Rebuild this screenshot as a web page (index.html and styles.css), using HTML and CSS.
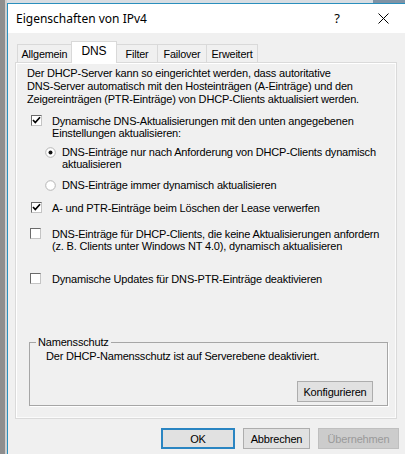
FILE: index.html
```html
<!DOCTYPE html>
<html lang="de">
<head>
<meta charset="utf-8">
<title>Eigenschaften von IPv4</title>
<link rel="stylesheet" href="styles.css">
</head>
<body>
<div class="screen">
  <div class="window">
    <div class="titlebar">
      <span class="title">Eigenschaften von IPv4</span>
      <span class="help">?</span>
      <svg class="close" width="11" height="11" viewBox="0 0 11 11"><path d="M0.5 0.5 L10.5 10.5 M10.5 0.5 L0.5 10.5" stroke="#000" stroke-width="1" fill="none"/></svg>
    </div>
    <div class="body">
      <div class="tabs">
        <div class="tab w-allg">Allgemein</div>
        <div class="tab tab-active w-dns">DNS</div>
        <div class="tab w-filter">Filter</div>
        <div class="tab w-fail">Failover</div>
        <div class="tab w-erw">Erweitert</div>
      </div>
      <div class="panel">
        <p class="intro">Der DHCP-Server kann so eingerichtet werden, dass autoritative<br>DNS-Server automatisch mit den Hosteinträgen (A-Einträge) und den<br>Zeigereinträgen (PTR-Einträge) von DHCP-Clients aktualisiert werden.</p>

        <div class="opt o-cb1">
          <span class="cb"><svg width="9" height="9" viewBox="0 0 9 9"><path d="M1 4 L3.3 6.5 L8 1.3" stroke="#000" stroke-width="1.7" fill="none"/></svg></span>
          <span class="lbl">Dynamische DNS-Aktualisierungen mit den unten angegebenen<br>Einstellungen aktualisieren:</span>
        </div>

        <div class="opt sub o-r1">
          <svg class="rb" width="11" height="11" viewBox="0 0 11 11"><circle cx="5.5" cy="5.5" r="4.8" fill="#fff" stroke="#b5b5b5"/><circle cx="5.5" cy="5.5" r="2" fill="#111"/></svg>
          <span class="lbl">DNS-Einträge nur nach Anforderung von DHCP-Clients dynamisch<br>aktualisieren</span>
        </div>

        <div class="opt sub o-r2">
          <svg class="rb" width="11" height="11" viewBox="0 0 11 11"><circle cx="5.5" cy="5.5" r="4.8" fill="#fff" stroke="#b5b5b5"/></svg>
          <span class="lbl">DNS-Einträge immer dynamisch aktualisieren</span>
        </div>

        <div class="opt o-cb2">
          <span class="cb"><svg width="9" height="9" viewBox="0 0 9 9"><path d="M1 4 L3.3 6.5 L8 1.3" stroke="#000" stroke-width="1.7" fill="none"/></svg></span>
          <span class="lbl">A- und PTR-Einträge beim Löschen der Lease verwerfen</span>
        </div>

        <div class="opt o-cb3">
          <span class="cb"></span>
          <span class="lbl">DNS-Einträge für DHCP-Clients, die keine Aktualisierungen anfordern<br>(z. B. Clients unter Windows NT 4.0), dynamisch aktualisieren</span>
        </div>

        <div class="opt o-cb4">
          <span class="cb"></span>
          <span class="lbl">Dynamische Updates für DNS-PTR-Einträge deaktivieren</span>
        </div>

        <fieldset class="group">
          <legend>Namensschutz</legend>
          <p class="group-text">Der DHCP-Namensschutz ist auf Serverebene deaktiviert.</p>
          <div class="group-actions">
            <button class="btn btn-config" type="button">Konfigurieren</button>
          </div>
        </fieldset>
      </div>
      <div class="actions">
        <button class="btn btn-ok" type="button">OK</button>
        <button class="btn btn-cancel" type="button">Abbrechen</button>
        <button class="btn btn-apply" type="button" disabled>Übernehmen</button>
      </div>
    </div>
  </div>
</div>
</body>
</html>
```
FILE: styles.css
```css
* { box-sizing: border-box; }
html, body { margin: 0; padding: 0; }
body {
  width: 405px;
  height: 454px;
  overflow: hidden;
  font-family: "Liberation Sans", Arial, sans-serif;
  font-size: 11px;
  letter-spacing: -0.18px;
  color: #000;
}
.screen {
  width: 405px;
  height: 454px;
  overflow: hidden;
  padding: 3px 0 0 7px;
  background:
    linear-gradient(90deg, #8e8e8e 0 5px, #cfcfcf 5px 7px, transparent 7px),
    linear-gradient(90deg, #d8dde2 0 373px, #7f93a5 373px);
}
.window {
  width: 430px;
  height: 460px;
  border-top: 1px solid #2a8fbd;
  border-left: 1px solid #2a8fbd;
  background: #f0f0f0;
}
.titlebar {
  height: 29px;
  background: #fff;
  display: flex;
  align-items: center;
  padding-left: 8px;
}
.title {
  font-family: "Noto Sans", "Open Sans", sans-serif;
  font-size: 12px;
  letter-spacing: 0;
  margin-top: -1px;
}
.help {
  font-family: "Noto Sans", sans-serif;
  font-size: 13px;
  letter-spacing: 0;
  margin-left: auto;
  margin-top: -1px;
}
.close {
  margin-left: 38px;
  margin-right: 48px;
  margin-top: -1px;
}
.body {
  padding-top: 8px;
}
.tabs {
  display: flex;
  align-items: flex-end;
  height: 21px;
  margin-left: 9px;
}
.tab {
  height: 18px;
  border: 1px solid #d9d9d9;
  border-bottom: none;
  background: #f0f0f0;
  margin-right: -1px;
  display: flex;
  align-items: center;
  justify-content: center;
  padding-top: 1px;
  font-size: 10.8px;
}
.tab-active {
  height: 22px;
  background: #fff;
  margin-bottom: -1px;
  position: relative;
  z-index: 1;
  font-size: 12px;
  align-items: flex-start;
  padding-top: 2px;
}
.w-allg { width: 55px; }
.w-dns { width: 46px; }
.w-filter { width: 42px; }
.w-fail { width: 50px; }
.w-erw { width: 52px; }

.panel {
  width: 382px;
  height: 357px;
  margin-left: 7px;
  border: 1px solid #dadada;
  box-shadow: inset 1px 1px 0 #fff, inset -1px -1px 0 #fbfbfb;
  display: flex;
  flex-direction: column;
  padding: 4px 0 12px 11px;
}
.intro {
  margin: 0;
  line-height: 13px;
  white-space: nowrap;
}
.opt {
  display: flex;
  align-items: flex-start;
  line-height: 12px;
  white-space: nowrap;
}
.opt .lbl { display: block; }
.cb {
  flex: none;
  width: 11px;
  height: 11px;
  margin: 0 10px 0 4px;
  border: 1px solid;
  border-color: #6a6a6a #c4c4c4 #c4c4c4 #6a6a6a;
  background: #fff;
  display: flex;
  align-items: center;
  justify-content: center;
}
.rb {
  flex: none;
  margin: 1px 6px 0 18px;
}
.o-cb1 { margin-top: 9px; }
.o-r1 { margin-top: 7px; }
.o-r2 { margin-top: 9px; }
.o-cb2 { margin-top: 11px; }
.o-cb3 { margin-top: 14px; }
.o-cb4 { margin-top: 21px; }
.o-cb3 .cb, .o-cb4 .cb { margin-left: 3px; margin-right: 11px; }

.group {
  margin: auto 0 0 2px;
  width: 359px;
  padding: 0 14px 3px 8px;
  border: 1px solid #a6a6a6;
  box-shadow: 1px 1px 0 #fff;
  min-inline-size: 0;
}
.group legend {
  padding: 0 2px;
  margin-left: -2px;
  line-height: 13px;
}
.group-text {
  margin: 1px 0 0 8px;
  line-height: 13px;
  white-space: nowrap;
}
.group-actions {
  display: flex;
  justify-content: flex-end;
  margin-top: 18px;
}
.btn {
  font-family: "Liberation Sans", Arial, sans-serif;
  font-size: 11px;
  letter-spacing: -0.18px;
  color: #000;
  height: 21px;
  padding: 0;
  background: #e1e1e1;
  border: 1px solid #adadad;
  border-radius: 0;
}
.btn-config { width: 76px; }
.actions {
  display: flex;
  justify-content: flex-end;
  gap: 8px;
  width: 391px;
  margin-top: 9px;
}
.btn-ok { width: 74px; border: 2px solid #2a85c2; }
.btn-cancel { width: 67px; }
.btn-apply {
  width: 81px;
  background: #cccccc;
  border-color: #bfbfbf;
  color: #9a9a9a;
}
```
